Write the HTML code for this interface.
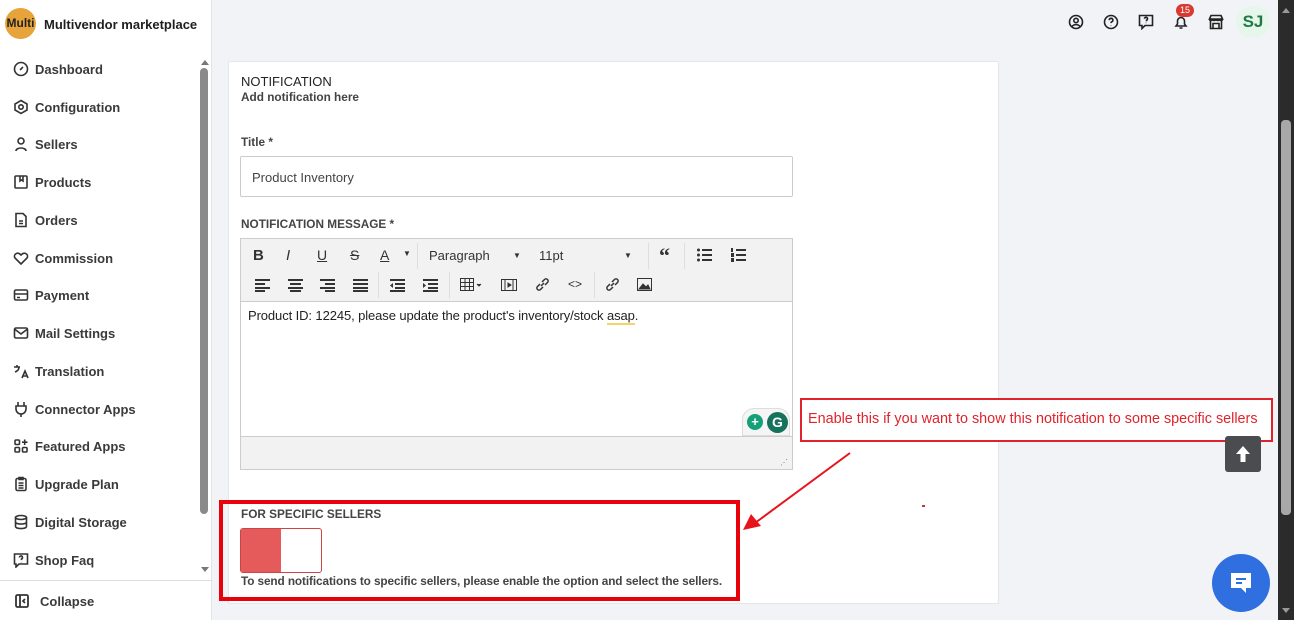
<!DOCTYPE html>
<html><head><meta charset="utf-8"><style>
*{box-sizing:border-box;margin:0;padding:0}
body{width:1294px;height:620px;overflow:hidden;background:#f1f3f7;font-family:"Liberation Sans",Arial,sans-serif;position:relative;color:#303030}
.a{position:absolute}
#side{left:0;top:0;width:212px;height:620px;background:#fff;border-right:1px solid #e2e4e8}
.logo{left:5px;top:8px;width:31px;height:31px;border-radius:50%;background:#e6a43a;font-size:12px;font-weight:bold;color:#222;line-height:31px;text-align:center;overflow:hidden}
.brand{left:44px;top:17px;font-size:13px;font-weight:bold;color:#1e1e1e}
.nav{left:13px;font-size:13px;color:#3a3a3a;font-weight:bold;display:flex;align-items:center;gap:6px}
.nav svg{width:16px;height:16px;fill:none;stroke:#333;stroke-width:1.6}
.sb{left:200px;top:68px;width:8px;height:446px;background:#8a8a8a;border-radius:4px}
.lbl{font-size:11.8px;font-weight:bold;color:#444}
.tb{font-size:13px;color:#333;}
</style></head><body>
<div id="side" class="a">
<div class="a logo">Multi</div>
<div class="a brand">Multivendor marketplace</div>
<div class="a" style="left:201px;top:56px;width:0;height:0;border:4px solid transparent;border-bottom:5px solid #777"></div>
<div class="a sb"></div>
<div class="a" style="left:201px;top:567px;width:0;height:0;border:4px solid transparent;border-top:5px solid #777"></div>
<div class="a nav" style="top:61px"><svg viewBox="0 0 16 16"><circle cx="8" cy="8" r="6.5"/><path d="M7 9l3-3"/></svg>Dashboard</div>
<div class="a nav" style="top:99px"><svg viewBox="0 0 16 16"><path d="M8 1.5l6 3.5v6l-6 3.5-6-3.5v-6z"/><circle cx="8" cy="8" r="2.2"/></svg>Configuration</div>
<div class="a nav" style="top:136px"><svg viewBox="0 0 16 16"><circle cx="8" cy="5" r="3"/><path d="M3 15c0-4 10-4 10 0"/></svg>Sellers</div>
<div class="a nav" style="top:174px"><svg viewBox="0 0 16 16"><rect x="2" y="2" width="12" height="12" rx="1"/><path d="M7 2v5l1.5-1 1.5 1V2"/></svg>Products</div>
<div class="a nav" style="top:212px"><svg viewBox="0 0 16 16"><path d="M3 1.5h7l3 3v10H3z M6 9h4M6 11.5h4"/></svg>Orders</div>
<div class="a nav" style="top:250px"><svg viewBox="0 0 16 16"><path d="M8 14L2 8c-2-3 2-7 6-3 4-4 8 0 6 3z"/></svg>Commission</div>
<div class="a nav" style="top:287px"><svg viewBox="0 0 16 16"><rect x="1.5" y="3" width="13" height="10" rx="1.5"/><path d="M1.5 7h13M4 10.5h3"/></svg>Payment</div>
<div class="a nav" style="top:325px"><svg viewBox="0 0 16 16"><rect x="1.5" y="3" width="13" height="10" rx="1.5"/><path d="M1.5 4l6.5 5 6.5-5"/></svg>Mail Settings</div>
<div class="a nav" style="top:363px"><svg viewBox="0 0 16 16"><path d="M1 4h6M4 2v2M2 9c3-1 4-3 4-5M9 15l3-7 3 7M10 13h4"/></svg>Translation</div>
<div class="a nav" style="top:401px"><svg viewBox="0 0 16 16"><path d="M5 1v4M11 1v4M3 5h10v3a5 5 0 0 1-10 0zM8 13v3"/></svg>Connector Apps</div>
<div class="a nav" style="top:438px"><svg viewBox="0 0 16 16"><rect x="2" y="2" width="4.5" height="4.5" rx="1"/><rect x="2" y="9.5" width="4.5" height="4.5" rx="1"/><rect x="9.5" y="9.5" width="4.5" height="4.5" rx="1"/><path d="M11.7 1.5v5.5M9 4.2h5.5"/></svg>Featured Apps</div>
<div class="a nav" style="top:476px"><svg viewBox="0 0 16 16"><rect x="3" y="2.5" width="10" height="12" rx="1.5"/><path d="M6 1.5h4v2H6zM5.5 7h5M5.5 9.5h5M5.5 12h5"/></svg>Upgrade Plan</div>
<div class="a nav" style="top:514px"><svg viewBox="0 0 16 16"><ellipse cx="8" cy="3.5" rx="5.5" ry="2"/><path d="M2.5 3.5v9c0 2.7 11 2.7 11 0v-9M2.5 8c0 2.7 11 2.7 11 0"/></svg>Digital Storage</div>
<div class="a nav" style="top:552px"><svg viewBox="0 0 16 16"><path d="M1.5 2h13v10H6l-3 3v-3H1.5z"/><path d="M6.5 5.5a1.5 1.5 0 1 1 2 1.4v1.2M8.5 10v.3"/></svg>Shop Faq</div>
<div class="a" style="left:0;top:580px;width:212px;border-top:1px solid #ddd"></div>
<div class="a nav" style="top:593px;left:14px;gap:10px"><svg viewBox="0 0 16 16" style="stroke-width:1.8"><rect x="2" y="2" width="12" height="12" rx="1.5"/><path d="M6 2v12M11 6l-2 2 2 2"/></svg>Collapse</div>
</div>

<svg class="a" style="left:1068px;top:14px" width="16" height="16" viewBox="0 0 16 16" fill="none" stroke="#222" stroke-width="1.6"><circle cx="8" cy="8" r="6.5"/><circle cx="8" cy="6.5" r="2.2"/><path d="M4 12.5c2-2.5 6-2.5 8 0"/></svg>
<svg class="a" style="left:1103px;top:14px" width="16" height="16" viewBox="0 0 16 16" fill="none" stroke="#222" stroke-width="1.6"><circle cx="8" cy="8" r="6.5"/><path d="M6.3 6.2a1.8 1.8 0 1 1 2.4 1.6c-.6.3-.7.6-.7 1.3M8 11v.4"/></svg>
<svg class="a" style="left:1138px;top:14px" width="16" height="16" viewBox="0 0 16 16" fill="none" stroke="#222" stroke-width="1.6"><path d="M1.5 1.5h13v10H7l-3 3v-3H1.5z"/><path d="M6.5 4.8a1.5 1.5 0 1 1 2 1.4v1M8 8.8v.3"/></svg>
<svg class="a" style="left:1173px;top:14px" width="16" height="16" viewBox="0 0 16 16" fill="none" stroke="#222" stroke-width="1.6"><path d="M3 12h10l-1.5-2V7a3.5 3.5 0 0 0-7 0v3zM6.5 14h3"/></svg>
<div class="a" style="left:1176px;top:4px;width:18px;height:13px;border-radius:7px;background:#d83a32;color:#fff;font-size:9px;text-align:center;line-height:13px">15</div>
<svg class="a" style="left:1208px;top:14px" width="16" height="16" viewBox="0 0 16 16" fill="none" stroke="#222" stroke-width="1.6"><path d="M1.5 5l1.5-3.5h10L14.5 5zM2.5 5v9.5h11V5M5 14.5v-5h6v5M1.5 5c0 2 3 2 3 0 0 2 3.5 2 3.5 0 0 2 3.5 2 3.5 0 0 2 3 2 3 0"/></svg>
<div class="a" style="left:1236px;top:6px;width:34px;height:32px;border-radius:50%;background:#e6f6ea;color:#1f7a45;font-weight:bold;font-size:17px;text-align:center;line-height:32px">SJ</div>

<div class="a" style="left:1278px;top:0;width:16px;height:620px;background:#2b2b2b"></div>
<div class="a" style="left:1281px;top:120px;width:10px;height:395px;background:#a8a8a8;border-radius:4px"></div>
<div class="a" style="left:1282px;top:4px;width:0;height:0;border:4px solid transparent;border-bottom:5px solid #999"></div>
<div class="a" style="left:1282px;top:608px;width:0;height:0;border:4px solid transparent;border-top:5px solid #999"></div>

<div class="a" style="left:228px;top:61px;width:771px;height:543px;background:#fff;border:1px solid #e4e6ea;border-radius:2px"></div>
<div class="a" style="left:241px;top:74px;font-size:13px;color:#222">NOTIFICATION</div>
<div class="a lbl" style="left:241px;top:90px">Add notification here</div>
<div class="a lbl" style="left:241px;top:135px">Title <span style="color:#444">*</span></div>
<div class="a" style="left:240px;top:156px;width:553px;height:41px;border:1px solid #ccc;border-radius:2px;font-size:13px;color:#444;padding:13px 11px">Product Inventory</div>
<div class="a lbl" style="left:241px;top:217px">NOTIFICATION MESSAGE *</div>

<div class="a" style="left:240px;top:238px;width:553px;height:232px;border:1px solid #ccc;background:#f2f2f2"></div>
<div class="a" style="left:241px;top:301px;width:551px;height:136px;background:#fff;border-top:1px solid #ccc;border-bottom:1px solid #ccc"></div>
<div class="a" style="left:248px;top:308px;font-size:13px;color:#222;letter-spacing:-0.1px">Product ID: 12245, please update the product's inventory/stock <span style="border-bottom:2px solid #f3d36a">asap</span>.</div>
<div class="a tb" style="left:253px;top:247px;font-weight:bold;font-size:15px">B</div>
<div class="a tb" style="left:286px;top:247px;font-style:italic;font-size:15px">I</div>
<div class="a tb" style="left:317px;top:247px;text-decoration:underline;font-size:14px">U</div>
<div class="a tb" style="left:350px;top:247px;text-decoration:line-through;font-size:14px">S</div>
<div class="a tb" style="left:380px;top:247px;text-decoration:underline;font-size:14px">A</div>
<div class="a tb" style="left:403px;top:249px;font-size:8px">▼</div>
<div class="a" style="left:417px;top:243px;height:26px;border-left:1px solid #ddd"></div>
<div class="a tb" style="left:429px;top:248px">Paragraph</div>
<div class="a tb" style="left:513px;top:251px;font-size:8px">▼</div>
<div class="a tb" style="left:539px;top:248px">11pt</div>
<div class="a tb" style="left:624px;top:251px;font-size:8px">▼</div>
<div class="a" style="left:648px;top:243px;height:26px;border-left:1px solid #ddd"></div>
<div class="a tb" style="left:659px;top:243px;font-size:22px;font-weight:bold;font-family:'Liberation Serif',serif">“</div>
<div class="a" style="left:684px;top:243px;height:26px;border-left:1px solid #ddd"></div>
<svg class="a" style="left:697px;top:248px" width="15" height="14" viewBox="0 0 15 14" fill="#333"><circle cx="1.5" cy="2" r="1.5"/><circle cx="1.5" cy="7" r="1.5"/><circle cx="1.5" cy="12" r="1.5"/><rect x="5" y="1" width="10" height="2"/><rect x="5" y="6" width="10" height="2"/><rect x="5" y="11" width="10" height="2"/></svg>
<svg class="a" style="left:731px;top:248px" width="15" height="14" viewBox="0 0 15 14" fill="#333"><rect x="0" y="0" width="2" height="4"/><rect x="0" y="5" width="3" height="4"/><rect x="0" y="10" width="3" height="4"/><rect x="5" y="1" width="10" height="2"/><rect x="5" y="6" width="10" height="2"/><rect x="5" y="11" width="10" height="2"/></svg>
<svg class="a" style="left:255px;top:279px" width="150" height="13" viewBox="0 0 150 13" fill="#333">
<rect x="0" y="0" width="15" height="2"/><rect x="0" y="4" width="10" height="2"/><rect x="0" y="8" width="15" height="2"/><rect x="0" y="11" width="10" height="2"/>
<rect x="33" y="0" width="15" height="2"/><rect x="35" y="4" width="11" height="2"/><rect x="33" y="8" width="15" height="2"/><rect x="35" y="11" width="11" height="2"/>
<rect x="65" y="0" width="15" height="2"/><rect x="70" y="4" width="10" height="2"/><rect x="65" y="8" width="15" height="2"/><rect x="70" y="11" width="10" height="2"/>
<rect x="98" y="0" width="15" height="2"/><rect x="98" y="4" width="15" height="2"/><rect x="98" y="8" width="15" height="2"/><rect x="98" y="11" width="15" height="2"/>
<rect x="135" y="0" width="15" height="2"/><rect x="140" y="4" width="10" height="2"/><rect x="140" y="8" width="10" height="2"/><rect x="135" y="11" width="15" height="2"/><path d="M138 4v5l-3-2.5z"/>
</svg>
<div class="a" style="left:378px;top:272px;height:26px;border-left:1px solid #ddd"></div>
<svg class="a" style="left:423px;top:279px" width="15" height="13" viewBox="0 0 15 13" fill="#333"><rect x="0" y="0" width="15" height="2"/><rect x="5" y="4" width="10" height="2"/><rect x="5" y="8" width="10" height="2"/><rect x="0" y="11" width="15" height="2"/><path d="M0 4v5l3-2.5z"/></svg>
<div class="a" style="left:449px;top:272px;height:26px;border-left:1px solid #ddd"></div>
<svg class="a" style="left:460px;top:278px" width="24" height="14" viewBox="0 0 24 14" fill="none" stroke="#333"><rect x=".5" y=".5" width="13" height="12"/><path d="M.5 4.5h13M.5 8.5h13M5 .5v12M9.5 .5v12"/><path d="M17 6l2 2 2-2" fill="#333"/></svg>
<svg class="a" style="left:501px;top:278px" width="16" height="14" viewBox="0 0 16 14" fill="none" stroke="#333"><rect x=".5" y="1.5" width="15" height="11"/><path d="M4 1.5v11M12 1.5v11M7 5l3 2-3 2z" fill="#333"/></svg>
<svg class="a" style="left:535px;top:277px" width="15" height="15" viewBox="0 0 15 15" fill="none" stroke="#333" stroke-width="1.5"><path d="M6 9l3-3M5 7l-2.5 2.5a2 2 0 0 0 3 3L8 10M7 5l2.5-2.5a2 2 0 0 1 3 3L10 8"/></svg>
<div class="a tb" style="left:568px;top:277px;font-size:12px">&lt;&gt;</div>
<div class="a" style="left:594px;top:272px;height:26px;border-left:1px solid #ddd"></div>
<svg class="a" style="left:605px;top:277px" width="15" height="15" viewBox="0 0 15 15" fill="none" stroke="#333" stroke-width="1.5"><path d="M6 9l3-3M5 7l-2.5 2.5a2 2 0 0 0 3 3L8 10M7 5l2.5-2.5a2 2 0 0 1 3 3L10 8"/></svg>
<svg class="a" style="left:637px;top:278px" width="15" height="13" viewBox="0 0 15 13" fill="none" stroke="#333"><rect x=".5" y=".5" width="14" height="12"/><path d="M2 11l4-5 3 3 2-2 2 4z" fill="#333"/></svg>
<div class="a" style="left:742px;top:408px;width:48px;height:28px;border-radius:12px 12px 0 0;background:#f5f5f5;border:1px solid #ddd"></div>
<div class="a" style="left:747px;top:414px;width:16px;height:16px;border-radius:50%;background:#15a07a;color:#fff;font-size:13px;text-align:center;line-height:16px;font-weight:bold">+</div>
<div class="a" style="left:767px;top:412px;width:21px;height:21px;border-radius:50%;background:#15725c;color:#fff;font-size:14px;text-align:center;line-height:21px;font-weight:bold">G</div>
<div class="a" style="left:780px;top:458px;font-size:8px;color:#777">⋰</div>

<div class="a lbl" style="left:241px;top:507px">FOR SPECIFIC SELLERS</div>
<div class="a" style="left:240px;top:528px;width:82px;height:45px;border:1px solid #c44;border-radius:3px;background:#fff;overflow:hidden"><div style="width:40px;height:100%;background:#e55a5a"></div></div>
<div class="a lbl" style="left:241px;top:574px;letter-spacing:-0.1px">To send notifications to specific sellers, please enable the option and select the sellers.</div>
<div class="a" style="left:219px;top:500px;width:521px;height:101px;border:4px solid #e8000b"></div>

<div class="a" style="left:800px;top:398px;width:473px;height:44px;border:2px solid #e0232b;background:#fff;color:#e0232b;font-size:14.4px;padding:11px 6px;white-space:nowrap">Enable this if you want to show this notification to some specific sellers</div>
<svg class="a" style="left:740px;top:448px" width="115" height="85" viewBox="0 0 115 85"><path d="M110 5L15 75" stroke="#e8141c" stroke-width="2"/><path d="M3 82l8-16 10 12z" fill="#e8141c"/></svg>
<div class="a" style="left:922px;top:505px;width:3px;height:2px;background:#c33"></div>

<div class="a" style="left:1225px;top:436px;width:36px;height:36px;background:#4a4c4f;border-radius:3px"></div>
<svg class="a" style="left:1233px;top:444px" width="20" height="20" viewBox="0 0 20 20" fill="#fff"><path d="M10 2l7 8h-4.5v8h-5v-8H3z"/></svg>
<div class="a" style="left:1212px;top:554px;width:58px;height:58px;border-radius:50%;background:#2f6fe0"></div>
<svg class="a" style="left:1229px;top:571px" width="24" height="24" viewBox="0 0 24 24"><path d="M2 2h20v15h-5v5l-5-5H2z" fill="#fff"/><path d="M7 8h10M7 12h6" stroke="#2f6fe0" stroke-width="2"/></svg>
</body></html>
